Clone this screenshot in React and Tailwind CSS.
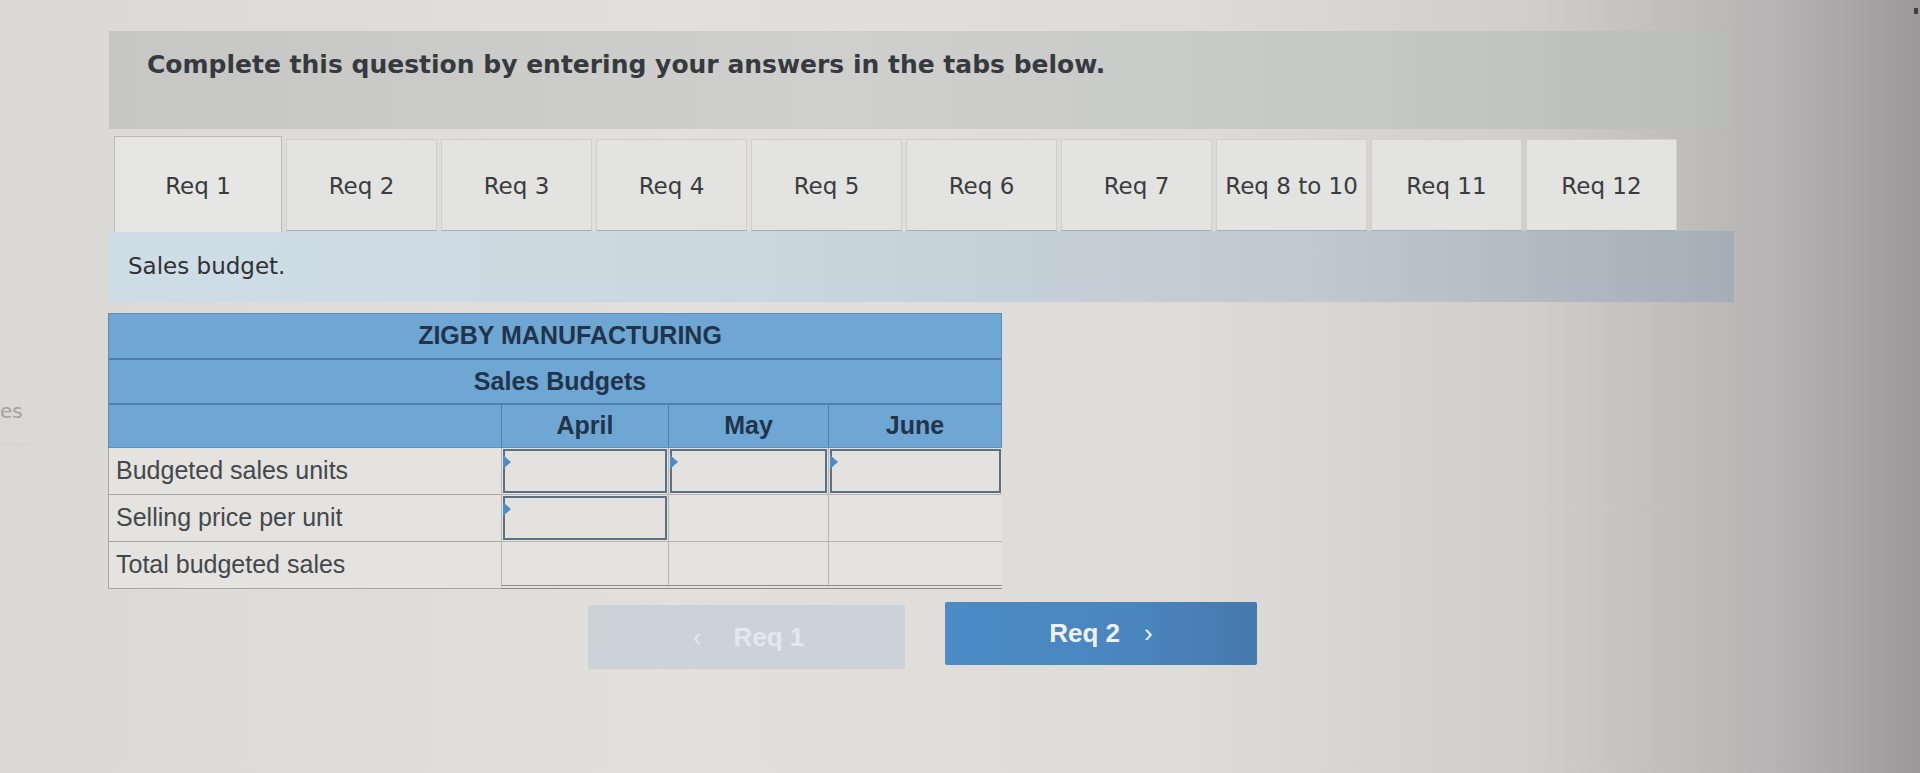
import React from 'react';

const tabs = ['Req 1', 'Req 2', 'Req 3', 'Req 4', 'Req 5', 'Req 6', 'Req 7', 'Req 8 to 10', 'Req 11', 'Req 12'];

const rows = [
  { label: 'Budgeted sales units', inputs: [true, true, true] },
  { label: 'Selling price per unit', inputs: [true, false, false] },
  { label: 'Total budgeted sales', inputs: [false, false, false], total: true },
];

function InputCell() {
  return (
    <div className="relative h-full w-full border-2 border-[#5d6f82] bg-[#e3e2df]">
      <span className="absolute left-[-2px] top-[4px] h-0 w-0 border-y-[7px] border-l-[8px] border-y-transparent border-l-[#4d8cc6]" />
    </div>
  );
}

export default function App() {
  return (
    <div
      className="relative h-[773px] w-full overflow-hidden bg-[linear-gradient(90deg,#dad9d6_0%,#e1e0dd_35%,#dddcd9_62%,#d0cecc_80%,#b4b2b2_93%,#9a9899_100%)]"
      style={{ fontFamily: '"DejaVu Sans", Verdana, sans-serif' }}
    >
      {/* cut-off sidebar on the left */}
      <div className="absolute left-0 top-[401px] text-[20px] leading-none text-[#a3a3a3]">es</div>
      <div className="absolute left-0 top-[444px] h-px w-[36px] bg-[#d3d3d1]" />
      <div className="absolute right-[2px] top-[8px] h-[6px] w-[4px] bg-[#3f3e40]" />

      <div className="ml-[109px] w-[1623px] pt-[31px]">
        <div className="flex h-[98px] items-start bg-[linear-gradient(90deg,#c6c7c5_0%,#cfd0ce_45%,#c5c7c4_80%,#babcb9_100%)] pl-[38px] pt-[18px]">
          <h1 className="text-[25px] font-bold leading-[32px] text-[#363a3e]">
            Complete this question by entering your answers in the tabs below.
          </h1>
        </div>

        <div className="mt-[7px] flex gap-[4px] pl-[5px]">
          {tabs.map((t, i) => (
            <div
              key={t}
              className={
                i === 0
                  ? 'relative z-10 -mb-px flex h-[96px] w-[168px] items-center justify-center border border-b-0 border-[#b9b9b7] bg-[#e6e6e4] pt-[4px] text-[23px] text-[#3a3a3a]'
                  : 'mt-[3px] flex h-[92px] w-[151px] items-center justify-center border border-[#cfcfcd] border-b-[#a9adb1] bg-[#e3e3e1] pt-[2px] text-[23px] text-[#3b3c3e]'
              }
            >
              {t}
            </div>
          ))}
        </div>

        <div className="flex h-[71px] w-[1626px] -ml-[1px] items-center bg-[linear-gradient(90deg,#cfdde6_0%,#cad7df_40%,#bec8cf_75%,#a4aeb6_100%)] pl-[20px]">
          <span className="text-[23px] text-[#2f3234]">Sales budget.</span>
        </div>

        <div
          className="-ml-[1px] mt-[11px] w-[894px] text-[25px]"
          style={{ fontFamily: '"Liberation Sans", Arial, sans-serif' }}
        >
          <div className="border border-[#5f8db5] bg-[#6ea6d4]">
            <div className="flex h-[46px] items-center justify-center border-b-2 border-[#4f80aa] pl-[30px] font-bold text-[#22344a]">
              ZIGBY MANUFACTURING
            </div>
            <div className="flex h-[45px] items-center justify-center border-b-2 border-[#4f80aa] pl-[10px] font-bold text-[#22344a]">
              Sales Budgets
            </div>
            <div className="grid h-[42px] grid-cols-[392px_167px_160px_173px] font-bold text-[#22344a]">
              <div />
              <div className="flex items-center justify-center border-l border-[#4f80aa]">April</div>
              <div className="flex items-center justify-center border-l border-[#4f80aa]">May</div>
              <div className="flex items-center justify-center border-l border-[#4f80aa]">June</div>
            </div>
          </div>

          {rows.map((r) => (
            <div
              key={r.label}
              className="grid h-[47px] grid-cols-[393px_167px_160px_174px] bg-[#e4e3e0] text-[#45484b]"
            >
              <div className="flex items-center border-b border-l border-[#a7a7a6] pl-[7px]">
                {r.label}
              </div>
              {r.inputs.map((inp, j) => (
                <div
                  key={j}
                  className={
                    r.total
                      ? 'border-b-4 border-l border-double border-[#8a8a8a] border-l-[#b5b5b4]'
                      : 'border-b border-l border-[#b5b5b4] p-[1px]'
                  }
                >
                  {inp ? <InputCell /> : null}
                </div>
              ))}
            </div>
          ))}
        </div>

        <div
          className="mt-[16px] flex justify-center gap-[40px] pl-[4px]"
          style={{ fontFamily: '"Liberation Sans", Arial, sans-serif' }}
        >
          <button
            type="button"
            disabled
            className="flex h-[64px] w-[317px] items-center justify-center gap-[32px] rounded-[2px] bg-[#cbd3d9] pl-[4px] text-[26px] font-bold text-[#e2e8ec]"
          >
            <span className="font-normal">‹</span>
            <span>Req 1</span>
          </button>
          <button
            type="button"
            className="-mt-[3px] flex h-[63px] w-[312px] items-center justify-center gap-[24px] rounded-[2px] bg-[linear-gradient(90deg,#4c8bc6_0%,#4a85be_60%,#4679ad_100%)] text-[26px] font-bold text-[#eef2f6]"
          >
            <span>Req 2</span>
            <span className="font-normal">›</span>
          </button>
        </div>
      </div>
    </div>
  );
}
